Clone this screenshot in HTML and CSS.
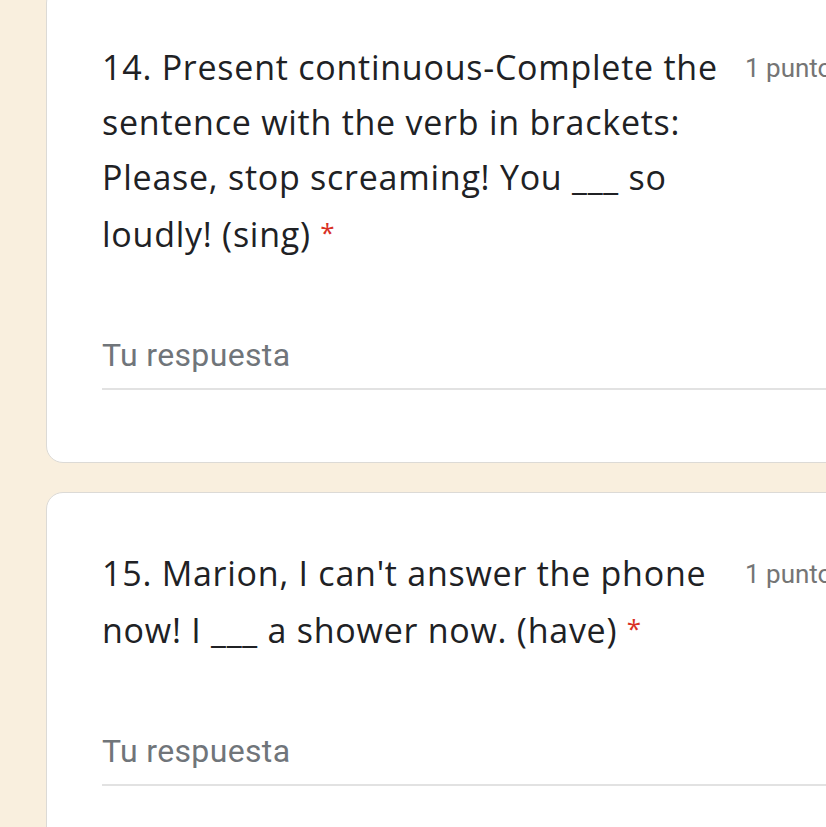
FILE: index.html
```html
<!DOCTYPE html>
<html lang="es">
<head>
<meta charset="utf-8">
<title>Formulario</title>
<link rel="stylesheet" href="styles.css">
</head>
<body>
<main class="page">
  <section class="card card-first">
    <div class="q-head">
      <div class="q-title">14. Present continuous-Complete the sentence with the verb in brackets: Please, stop screaming! You ___ so loudly! (sing) <span class="req">*</span></div>
      <div class="q-points">1 punto</div>
    </div>
    <div class="answer">Tu respuesta</div>
  </section>
  <section class="card">
    <div class="q-head">
      <div class="q-title">15. Marion, I can't answer the phone now! I ___ a shower now. (have) <span class="req">*</span></div>
      <div class="q-points">1 punto</div>
    </div>
    <div class="answer">Tu respuesta</div>
  </section>
</main>
</body>
</html>
```

FILE: styles.css
```css
html, body {
  margin: 0;
  padding: 0;
  overflow: hidden;
  background: #f9efde;
}
.page {
  display: flex;
  flex-direction: column;
  gap: 29px;
  padding-left: 46px;
  width: 1000px;
}
.card {
  background: #ffffff;
  border: 1px solid #dcdad6;
  border-radius: 17px;
  padding: 53px 0 72px 55px;
}
.card-first {
  margin-top: -14px;
}
.q-head {
  display: flex;
  align-items: flex-start;
}
.q-title {
  flex: 0 0 622px;
  font-family: "Open Sans", "Noto Sans", sans-serif;
  font-size: 34px;
  line-height: 55px;
  color: #202124;
  letter-spacing: 0.75px;
}
.req {
  color: #d93025;
  font-size: 26px;
  vertical-align: 5px;
}
.q-points {
  margin-left: 21px;
  padding-top: 1px;
  font-family: Roboto, "Liberation Sans", sans-serif;
  font-size: 26px;
  line-height: 55px;
  color: #757575;
  white-space: nowrap;
}
.answer {
  margin-top: 73px;
  width: 800px;
  font-family: Roboto, "Liberation Sans", sans-serif;
  font-size: 32px;
  letter-spacing: 0.35px;
  line-height: 40px;
  color: #70757a;
  padding-bottom: 13px;
  border-bottom: 2px solid #e2e2e2;
}
```
